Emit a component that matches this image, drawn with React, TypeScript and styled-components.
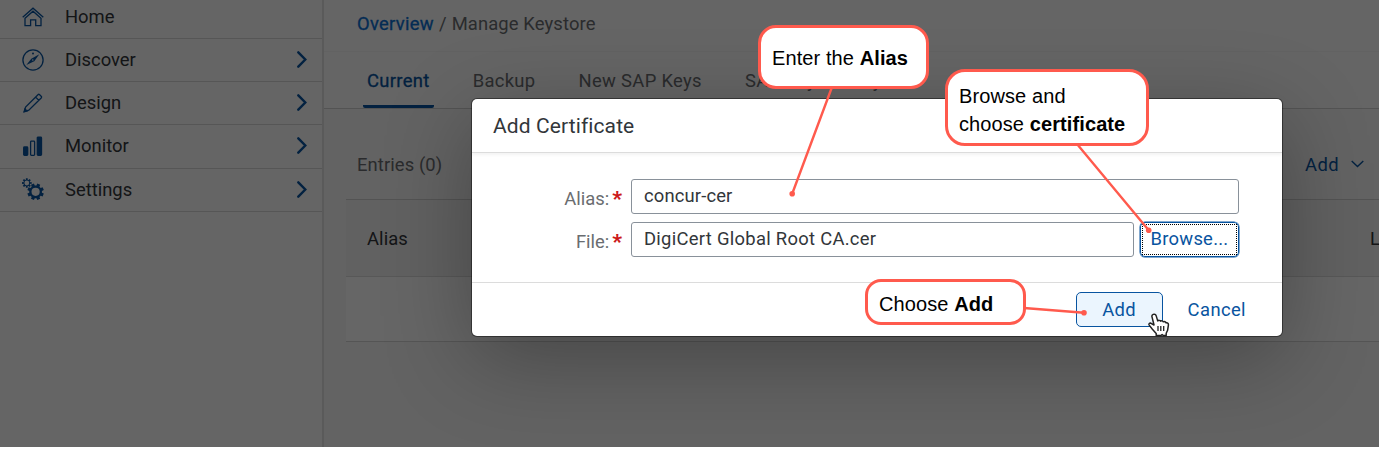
import React from 'react';
import styled, { createGlobalStyle, css } from 'styled-components';

const GlobalStyle = createGlobalStyle`
  * { box-sizing: border-box; }
  body { margin: 0; background: #fff; overflow: hidden; }
`;

const Screen = styled.div`
  position: relative;
  display: flex;
  width: 1379px;
  height: 447px;
  overflow: hidden;
  background: #fcfcfc;
  color: #32363a;
  font-family: Roboto, 'Noto Sans', sans-serif;
  font-size: 18.4px;
`;

const Sidebar = styled.nav`
  width: 324px;
  flex: none;
  border-right: 2px solid #e2e2e2;
`;

const NavRow = styled.div<{ $first?: boolean }>`
  display: flex;
  align-items: center;
  height: ${p => (p.$first ? 39 : 43.2)}px;
  padding: ${p => (p.$first ? '0 15px 5px 22px' : '0 15px 1px 22px')};
  border-bottom: 1px solid #d8d8d8;
`;

const NavIcon = styled.svg`
  width: 22px;
  height: 22px;
  margin-right: 21px;
  fill: none;
  stroke: #0854a0;
  stroke-width: 1.3;
`;

const Chevron = styled.svg`
  width: 10px;
  height: 17px;
  margin-left: auto;
  fill: none;
  stroke: #0854a0;
  stroke-width: 2.4;
  stroke-linecap: round;
`;

const Label = styled.span<{ $spacing?: number }>`
  white-space: nowrap;
  letter-spacing: ${p => p.$spacing ?? 0}px;
`;

const Main = styled.main`
  flex: 1;
  min-width: 0;
  color: #6a6d70;
`;

const Breadcrumb = styled.div`
  display: flex;
  gap: 5px;
  height: 52px;
  padding: 0 0 4px 33px;
  align-items: center;
  border-bottom: 1px solid #f5f5f5;
`;

const Crumb = styled.span<{ $link?: boolean }>`
  letter-spacing: 0.12px;
  ${p => p.$link && css`
    color: #0a6ed1;
    letter-spacing: 0.3px;
    -webkit-text-stroke: 0.3px #0a6ed1;
  `}
`;

const Tabs = styled.div`
  display: flex;
  height: 57px;
  padding-left: 39px;
  gap: 35px;
  border-bottom: 1px solid #d0d0d0;
`;

const Tab = styled.div<{ $active?: boolean }>`
  height: 56px;
  padding: 0 4px;
  line-height: 58px;
  letter-spacing: 0.33px;
  white-space: nowrap;
  ${p => p.$active && css`
    color: #0854a0;
    -webkit-text-stroke: 0.3px #0854a0;
    border-bottom: 3px solid #0854a0;
    border-radius: 2px;
  `}
`;

const TableArea = styled.section`
  height: 338px;
  padding-left: 22px;
  background: #f7f7f7;
`;

const Toolbar = styled.div`
  display: flex;
  justify-content: space-between;
  align-items: center;
  height: 91px;
  padding: 20px 15px 0 11px;
  border-bottom: 1px solid #d0d0d0;
`;

const AddMenu = styled.div`
  display: flex;
  align-items: center;
  gap: 12px;
  color: #0854a0;
`;

const HeaderRow = styled.div`
  display: flex;
  justify-content: space-between;
  align-items: center;
  height: 77px;
  padding: 0 0 0 21px;
  background: #f2f2f2;
  border-bottom: 1px solid #dcdcdc;
  color: #32363a;
`;

const LastHeading = styled.span`
  width: 9px;
`;

const EmptyRow = styled.div`
  height: 65px;
  border-bottom: 1px solid #d4d4d4;
  background: #fff;
`;

const Overlay = styled.div`
  position: absolute;
  inset: 0;
  display: flex;
  align-items: flex-start;
  padding: 99px 0 0 472px;
  background: rgba(0, 0, 0, 0.6);
`;

const Dialog = styled.div`
  width: 810px;
  height: 237px;
  display: flex;
  flex-direction: column;
  border-radius: 5px;
  background: #fff;
  box-shadow: 0 0 0 1px rgba(0, 0, 0, 0.42), 0 22px 88px rgba(0, 0, 0, 0.3);
`;

const DialogTitle = styled.div`
  display: flex;
  align-items: center;
  height: 54px;
  flex: none;
  padding-left: 21px;
  border-bottom: 1px solid #dcdcdc;
  box-shadow: 0 2px 3px rgba(0, 0, 0, 0.05);
  font-size: 21px;
`;

const Form = styled.div`
  display: flex;
  flex-direction: column;
  gap: 8px;
  flex: 1;
  padding: 26px 43px 0 0;
`;

const Field = styled.div`
  display: flex;
  height: 35px;
`;

const FieldLabel = styled.div`
  display: flex;
  justify-content: flex-end;
  width: 159px;
  padding-right: 9px;
  line-height: 39px;
  color: #6a6d70;
`;

const Required = styled.span`
  margin-left: 3px;
  color: #cc1919;
  font-weight: 900;
  font-size: 21px;
  line-height: 41px;
`;

const Input = styled.div<{ $spacing: number }>`
  flex: 1;
  padding-left: 12px;
  border: 1px solid #89919a;
  border-radius: 3px;
  line-height: 31px;
  letter-spacing: ${p => p.$spacing}px;
  white-space: nowrap;
`;

const BrowseButton = styled.div`
  display: flex;
  width: 99px;
  margin-left: 6px;
  padding: 1px;
  border: 1px solid #0854a0;
  border-radius: 5px;
  box-shadow: 0 0 0 0.5px #0854a0;
  color: #0854a0;
`;

const FocusRing = styled.span`
  flex: 1;
  border: 1px dotted #000;
  text-align: center;
  line-height: 28px;
  letter-spacing: 0.25px;
`;

const DialogFooter = styled.div`
  display: flex;
  align-items: center;
  justify-content: flex-end;
  height: 54px;
  flex: none;
  padding-right: 36px;
  border-top: 1px solid #dcdcdc;
  color: #0854a0;
`;

const PrimaryButton = styled.div`
  width: 87px;
  height: 35px;
  margin-right: 25px;
  border: 1px solid #0854a0;
  border-radius: 5px;
  background: #ebf5fe;
  text-align: center;
  line-height: 34px;
  letter-spacing: 0.4px;
`;

const Annotations = styled.svg`
  position: absolute;
  inset: 0;
  fill: #ff5a4d;
  stroke: #ff5a4d;
  stroke-width: 2.4;
`;

const Callout = styled.div<{ $x: number; $y: number; $w: number; $h: number; $top: number; $r: number }>`
  position: absolute;
  left: ${p => p.$x}px;
  top: ${p => p.$y}px;
  width: ${p => p.$w}px;
  height: ${p => p.$h}px;
  padding: ${p => p.$top}px 0 0 11px;
  border: 3px solid #ff5a4d;
  border-radius: ${p => p.$r}px;
  background: #fff;
  color: #000;
  font: 20px/28px 'Liberation Sans', Arial, sans-serif;
  letter-spacing: 0.1px;
  white-space: nowrap;
`;

const Pointer = styled.svg`
  position: absolute;
  left: 1148px;
  top: 312px;
`;

const gear = (cx: number, cy: number, r: number, depth: number, turn = 0) => {
  const points: string[] = [];
  for (let i = 0; i < 8; i++) {
    const base = (i * Math.PI) / 4 + turn;
    [[-0.26, r - depth], [-0.19, r], [0.19, r], [0.26, r - depth]].forEach(([a, d]) =>
      points.push(`${(cx + Math.cos(base + a) * d).toFixed(2)},${(cy + Math.sin(base + a) * d).toFixed(2)}`)
    );
  }
  return points.join(' ');
};

const icons = {
  home: (
    <>
      <path d="M.7 11.2 11 2.2l10.3 9" />
      <path d="M3 12.3 11 5.2l8 7.1v7.3h-5.3v-5.8H8.6v5.8H3z" />
    </>
  ),
  compass: (
    <>
      <circle cx="11" cy="11" r="10.1" />
      <path d="m4.3 16 5-6.3 8-4.4-5 6.9z" fill="#0854a0" stroke="none" />
      <circle cx="11" cy="4.4" r="1" fill="#0854a0" stroke="none" />
      <circle cx="10.8" cy="11" r=".8" fill="#fff" stroke="none" />
    </>
  ),
  pencil: (
    <>
      <path d="m2.2 19.6 1.4-4.5L16.2 2.5q.6-.5 1.2 0l2 2q.5.6 0 1.2L6.8 18.2zM13.6 5.1l3.2 3.2" />
      <path d="m1.3 20.7 1.3-5 3.7 3.6z" fill="#0854a0" stroke="none" />
    </>
  ),
  chart: (
    <>
      <rect x="1.7" y="11.9" width="4" height="8.4" rx=".8" fill="#0854a0" />
      <rect x="8.6" y="6.1" width="4" height="14.2" rx=".8" />
      <rect x="15.3" y="2.1" width="4.2" height="18.2" rx=".8" fill="#0854a0" />
    </>
  ),
  gears: (
    <>
      <polygon points={gear(4.8, 5, 4.9, 1.5)} fill="#0854a0" stroke="none" />
      <circle cx="4.8" cy="5" r="2.4" fill="#fff" stroke="none" />
      <polygon points={gear(13.6, 13.8, 8.4, 2, Math.PI / 8)} fill="#0854a0" stroke="none" />
      <circle cx="13.6" cy="13.8" r="4.1" fill="#fff" stroke="none" />
    </>
  ),
};

const navItems: { label: string; icon: keyof typeof icons }[] = [
  { label: 'Home', icon: 'home' },
  { label: 'Discover', icon: 'compass' },
  { label: 'Design', icon: 'pencil' },
  { label: 'Monitor', icon: 'chart' },
  { label: 'Settings', icon: 'gears' },
];

export default function App() {
  return (
    <>
      <GlobalStyle />
      <Screen>
        <Sidebar>
          {navItems.map((item, i) => (
            <NavRow key={item.label} $first={i === 0}>
              <NavIcon viewBox="0 0 22 22">{icons[item.icon]}</NavIcon>
              <Label>{item.label}</Label>
              {i > 0 && <Chevron viewBox="0 0 10 17"><path d="m1.3 1.3 7 7.2-7 7.2" /></Chevron>}
            </NavRow>
          ))}
        </Sidebar>
        <Main>
          <Breadcrumb>
            <Crumb $link>Overview</Crumb>
            <Crumb>/</Crumb>
            <Crumb>Manage Keystore</Crumb>
          </Breadcrumb>
          <Tabs>
            <Tab $active>Current</Tab>
            <Tab>Backup</Tab>
            <Tab>New SAP Keys</Tab>
            <Tab>SAP Key History</Tab>
          </Tabs>
          <TableArea>
            <Toolbar>
              <Label $spacing={0.1}>Entries (0)</Label>
              <AddMenu>
                <Label $spacing={0.4}>Add</Label>
                <svg width="13" height="8" viewBox="0 0 13 8" fill="none" stroke="#0854a0" strokeWidth="1.4"><path d="m.7 1 5.8 5.6L12.3 1" /></svg>
              </AddMenu>
            </Toolbar>
            <HeaderRow>
              <Label $spacing={0.1}>Alias</Label>
              <LastHeading>L</LastHeading>
            </HeaderRow>
            <EmptyRow />
          </TableArea>
        </Main>
        <Overlay>
          <Dialog>
            <DialogTitle><Label $spacing={0.1}>Add Certificate</Label></DialogTitle>
            <Form>
              <Field>
                <FieldLabel>Alias:<Required>*</Required></FieldLabel>
                <Input $spacing={0.15}>concur-cer</Input>
              </Field>
              <Field>
                <FieldLabel>File:<Required>*</Required></FieldLabel>
                <Input $spacing={0.29}>DigiCert Global Root CA.cer</Input>
                <BrowseButton><FocusRing>Browse...</FocusRing></BrowseButton>
              </Field>
            </Form>
            <DialogFooter>
              <PrimaryButton>Add</PrimaryButton>
              <Label $spacing={0.4}>Cancel</Label>
            </DialogFooter>
          </Dialog>
        </Overlay>
        <Annotations width="1379" height="447" viewBox="0 0 1379 447">
          <path d="M832 87 792.3 193.5M1077 144l71.5 86M1024 308l60 4.7" />
          <g stroke="none">
            <circle cx="792.2" cy="193.7" r="2.8" />
            <circle cx="1148.7" cy="230.2" r="2.8" />
            <circle cx="1084" cy="312.7" r="2.8" />
          </g>
        </Annotations>
        <Callout $x={758} $y={25} $w={171} $h={64} $top={16} $r={18}>Enter the <b>Alias</b></Callout>
        <Callout $x={945} $y={69} $w={204} $h={77} $top={10} $r={20}>Browse and<br />choose <b>certificate</b></Callout>
        <Callout $x={865} $y={279} $w={161} $h={46} $top={8} $r={16}>Choose <b>Add</b></Callout>
        <Pointer width="22" height="26" viewBox="0 0 22 26">
          <path
            d="M5.2 2.4c1.3-.6 2.6.1 3 1.5l1.5 5c.7-.8 2.4-.7 2.9.3.9-.7 2.2-.4 2.7.6 1-.5 2.2-.1 2.8 1.1 1.5-.4 2.5.6 2.3 2.2l-.8 5.2-1.4 3v2.2h-3l-1.1-1-1.1 1H8.2v-2.1l-3.8-4.2-3.2-4.1c-.8-1.2.5-2.4 1.8-1.8l3 1.7L4 4.9c-.3-1 .1-2 1.2-2.5z"
            fill="#fff" stroke="#222" strokeWidth="1.5" strokeLinejoin="round"
          />
          <path d="M10 14v5M12.8 14v5M15.7 14v5" fill="none" stroke="#222" strokeWidth="1.3" />
        </Pointer>
      </Screen>
    </>
  );
}
